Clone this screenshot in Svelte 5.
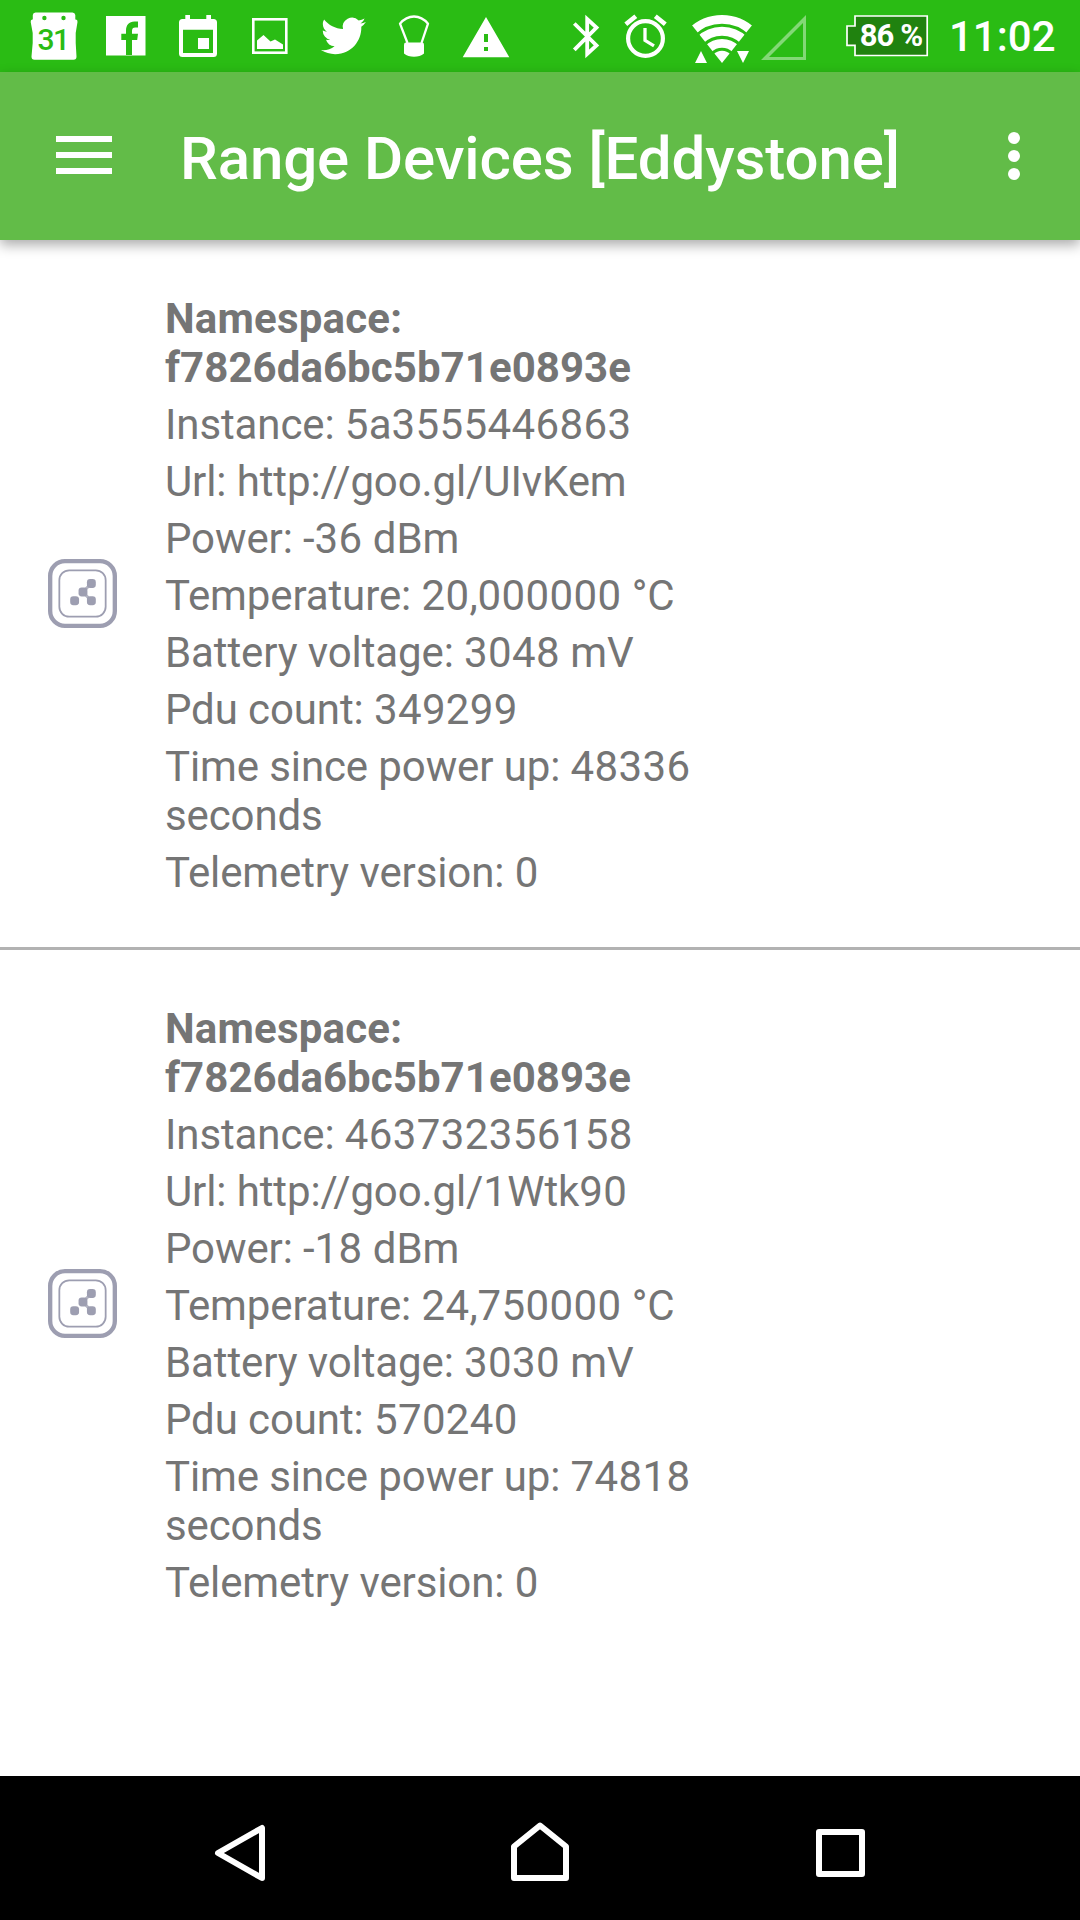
<script>
  const devices = [
    {
      namespace: 'f7826da6bc5b71e0893e',
      rows: [
        'Instance: 5a3555446863',
        'Url: http://goo.gl/UIvKem',
        'Power: -36 dBm',
        'Temperature: 20,000000 °C',
        'Battery voltage: 3048 mV',
        'Pdu count: 349299',
        'Time since power up: 48336 seconds',
        'Telemetry version: 0'
      ]
    },
    {
      namespace: 'f7826da6bc5b71e0893e',
      rows: [
        'Instance: 463732356158',
        'Url: http://goo.gl/1Wtk90',
        'Power: -18 dBm',
        'Temperature: 24,750000 °C',
        'Battery voltage: 3030 mV',
        'Pdu count: 570240',
        'Time since power up: 74818 seconds',
        'Telemetry version: 0'
      ]
    }
  ];

  // Runs of digits are spaced a little wider than the words around them.
  const runs = (text) => text.split(/(\d+)/).filter(Boolean);
  const isNumber = (run) => /^\d/.test(run);
</script>

<div class="screen">
  <div class="status">
    <div class="group">
      <!-- calendar 31 -->
      <svg width="72" height="72" viewBox="18 0 72 72">
        <path fill="#fff" fill-rule="evenodd" d="M35.500 12.500H72.500Q75 12.500 75.300 15V19.500H76Q77.700 19.500 77.500 22L75.700 33V43L76.500 56.500Q76.500 59.700 73.500 59.700H34.500Q31.500 59.700 31.500 56.500L32.700 43V33L30.700 22Q30.500 19.500 32.200 19.500H32.800V15Q33 12.500 35.500 12.500ZM42.200 18a2.200 2.200 0 1 0 4.400 0a2.200 2.200 0 1 0-4.400 0ZM61.300 18a2.200 2.200 0 1 0 4.400 0a2.200 2.200 0 1 0-4.400 0Z" />
        <text class="day" x="53" y="50" text-anchor="middle">31</text>
      </svg>
      <!-- facebook -->
      <svg width="72" height="72" viewBox="90 0 72 72">
        <path fill="#fff" fill-rule="evenodd" d="M106 16H145.500V55.600H106ZM126 56V40H121.300V33.800H126V31C126 25 129 21.600 134.500 21.600H138V27.600H135.300C133 27.600 132 28.700 132 31V33.800H138L137.200 40H132V56Z" />
      </svg>
      <!-- event -->
      <svg width="72" height="72" viewBox="162 0 72 72">
        <path fill="#fff" fill-rule="evenodd" d="M185.300 15H190V19H206.300V15H211V19H213.500Q217 19 217 22.500V53.500Q217 57 213.500 57H182.500Q179 57 179 53.500V22.500Q179 19 182.500 19H185.300ZM183 29.700V53H213V29.700ZM198 38H209V49H198Z" />
      </svg>
      <!-- picture -->
      <svg width="72" height="72" viewBox="234 0 72 72">
        <rect x="253.300" y="19.300" width="33" height="33.400" fill="none" stroke="#fff" stroke-width="2.600" />
        <path fill="#fff" d="M257 40.500L263.500 35L270.500 41.500L275 39.500L283 44.500V49H257Z" />
      </svg>
      <!-- twitter -->
      <svg width="72" height="72" viewBox="306 0 72 72">
        <path fill="#fff" transform="translate(321 13.500) scale(1.870)" d="M23.953 4.570a10 10 0 01-2.825.775 4.958 4.958 0 002.163-2.723c-.951.555-2.005.959-3.127 1.184a4.920 4.920 0 00-8.384 4.482C7.690 8.095 4.067 6.130 1.640 3.162a4.822 4.822 0 00-.666 2.475c0 1.710.870 3.213 2.188 4.096a4.904 4.904 0 01-2.228-.616v.060a4.923 4.923 0 003.946 4.827 4.996 4.996 0 01-2.212.085 4.936 4.936 0 004.604 3.417 9.867 9.867 0 01-6.102 2.105c-.390 0-.779-.023-1.170-.067a13.995 13.995 0 007.557 2.209c9.053 0 13.998-7.496 13.998-13.985 0-.210 0-.420-.015-.630A9.935 9.935 0 0024 4.590z" />
      </svg>
      <!-- balloon -->
      <svg width="72" height="72" viewBox="378 0 72 72">
        <path fill="none" stroke="#fff" stroke-width="2.300" stroke-linejoin="round" d="M407.500 43L400 23.700Q406 16.500 414 16.500T428 23.700L421.500 43" />
        <path fill="#fff" d="M406 42.500H422Q424 42.500 424 44.500V53.500Q420 56.700 414 56.700T404 53.500V44.500Q404 42.500 406 42.500Z" />
      </svg>
      <!-- warning -->
      <svg width="72" height="72" viewBox="450 0 72 72">
        <path fill="#fff" fill-rule="evenodd" d="M486 17L509.300 57.200H462.700ZM484 34V42H488V34ZM484 47V51H488V47Z" />
      </svg>
    </div>
    <div class="group">
      <!-- bluetooth -->
      <svg width="54" height="72" viewBox="561 0 54 72">
        <path fill="none" stroke="#fff" stroke-width="3.800" d="M574.300 23.500L596.500 45.500L587.200 54V19L596.500 27.500L574.300 49.800" />
      </svg>
      <!-- alarm -->
      <svg width="66" height="72" viewBox="615 0 66 72">
        <g fill="none" stroke="#fff">
          <circle cx="645.500" cy="38.500" r="17.400" stroke-width="4.200" />
          <path stroke-width="3.300" d="M645 28V40.300L654 45.800" />
          <path stroke-width="4.600" d="M625.800 24.300L635.800 16.300M665.300 24.300L655.300 16.300" />
        </g>
      </svg>
      <!-- wifi -->
      <svg width="78" height="72" viewBox="681 0 78 72">
        <clipPath id="fan"><path d="M722 63L685 16.500V0H759V16.500Z" /></clipPath>
        <g clip-path="url(#fan)" fill="none" stroke="#fff">
          <circle cx="722" cy="62.700" r="43.400" stroke-width="8.800" />
          <circle cx="722" cy="62.700" r="31.500" stroke-width="9" />
          <circle cx="722" cy="62.700" r="19.400" stroke-width="8.800" />
          <circle cx="722" cy="62.700" r="6" stroke-width="12" />
        </g>
        <path fill="#fff" d="M695 63L701 51L707 63ZM737 51H749L743 63Z" />
      </svg>
      <!-- empty signal -->
      <svg width="69" height="72" viewBox="759 0 69 72">
        <path fill="#fff" fill-opacity=".42" fill-rule="evenodd" d="M761 60L806 15V60ZM769 57H803V23Z" />
      </svg>
      <!-- battery -->
      <svg width="112" height="72" viewBox="828 0 112 72">
        <path fill="#20820f" stroke="#fff" stroke-width="1.700" d="M855 16H927.200V55.500H855V45.300H847V26H855Z" />
        <text class="charge" x="859.700" y="46.300" textLength="63.500">86 %</text>
      </svg>
      <span class="clock">11:02</span>
    </div>
  </div>

  <header class="appbar">
    <div class="menu"><i></i><i></i><i></i></div>
    <h1>Range Devices [Eddystone]</h1>
    <div class="more"><i></i><i></i><i></i></div>
  </header>

  <main>
    {#each devices as device}
      <section class="device">
        <svg class="beacon" width="69" height="69" viewBox="0 0 70 70">
          <rect x="2.200" y="2.200" width="65.600" height="65.600" rx="15" fill="none" stroke="#9d9eb1" stroke-width="4.400" />
          <rect x="11.500" y="11.500" width="47" height="47" rx="10" fill="none" stroke="#9d9eb1" stroke-width="1.800" />
          <path stroke="#b4b5c3" stroke-width="3" fill="none" d="M44 24.500L35.500 33.500L44 42.500" />
          <g fill="#9d9eb1">
            <rect x="39.500" y="20.300" width="9" height="9" rx="3.200" />
            <rect x="31" y="29" width="9" height="9" rx="3.200" />
            <rect x="22.500" y="37.800" width="9" height="9" rx="3.200" />
            <rect x="39.500" y="37.800" width="9" height="9" rx="3.200" />
          </g>
        </svg>
        <div class="info">
          <p class="name"><span class="key">Namespace:</span> {device.namespace}</p>
          {#each device.rows as row}
            <p>{#each runs(row) as run}<span class:num={isNumber(run)}>{run}</span>{/each}</p>
          {/each}
        </div>
      </section>
    {/each}
  </main>

  <nav>
    <svg width="60" height="72" viewBox="210 1812 60 72">
      <path d="M218 1853L262 1828V1878Z" />
    </svg>
    <svg width="70" height="72" viewBox="505 1812 70 72">
      <path d="M540 1825.500L566 1846.500V1878H514V1846.500Z" />
    </svg>
    <svg width="60" height="72" viewBox="810 1812 60 72">
      <path d="M819 1832H862V1874H819Z" />
    </svg>
  </nav>
</div>

<style>
  :global(body) {
    margin: 0;
    background: #fff;
  }
  .screen {
    width: 1080px;
    height: 1920px;
    display: flex;
    flex-direction: column;
    overflow: hidden;
    background: #fff;
    font-family: Roboto, sans-serif;
  }
  .status {
    height: 72px;
    flex: none;
    display: flex;
    justify-content: space-between;
    padding: 0 24px 0 18px;
    background: #2abc14;
  }
  .group {
    display: flex;
    align-items: center;
  }
  .group svg {
    display: block;
    flex: none;
  }
  .day {
    font-size: 30px;
    font-weight: 500;
    letter-spacing: -1.5px;
    fill: #2abc14;
  }
  .charge {
    font-size: 31px;
    font-weight: 700;
    fill: #fff;
  }
  .clock {
    width: 107px;
    margin-left: 9px;
    padding-top: 1px;
    font-size: 42px;
    line-height: 49px;
    font-weight: 500;
    color: #fff;
    white-space: nowrap;
  }
  .appbar {
    height: 168px;
    flex: none;
    box-sizing: border-box;
    display: flex;
    align-items: center;
    padding: 0 60px 0 56px;
    background: #62bc48;
    box-shadow: 0 5px 12px rgba(0, 0, 0, 0.33);
  }
  .menu {
    display: flex;
    flex-direction: column;
    gap: 10px;
    width: 56px;
    padding-bottom: 2px;
  }
  .menu i {
    height: 6px;
    background: #fff;
  }
  h1 {
    flex: 1;
    margin: 0;
    padding: 6px 0 0 68px;
    font-size: 60px;
    line-height: 70px;
    font-weight: 500;
    letter-spacing: -0.1px;
    color: #fff;
    white-space: nowrap;
  }
  .more {
    display: flex;
    flex-direction: column;
    gap: 6px;
  }
  .more i {
    width: 12px;
    height: 12px;
    border-radius: 50%;
    background: #fff;
  }
  main {
    flex: 1;
  }
  .device {
    display: flex;
    align-items: center;
    padding: 54px 0 50px 48px;
  }
  .device + .device {
    border-top: 3px solid #b2b2b2;
  }
  .beacon {
    flex: none;
    margin-bottom: 4px;
  }
  .info {
    width: 570px;
    margin-left: 48px;
    display: flex;
    flex-direction: column;
    gap: 8px;
  }
  p {
    margin: 0;
    font-size: 42px;
    line-height: 49px;
    letter-spacing: -0.11px;
    color: #757575;
  }
  .num {
    letter-spacing: 0.38px;
  }
  .name {
    font-weight: 700;
    letter-spacing: 0.06px;
  }
  .key {
    letter-spacing: 0.2px;
  }
  nav {
    height: 144px;
    flex: none;
    box-sizing: border-box;
    display: flex;
    justify-content: space-between;
    padding: 36px 210px 0;
    background: #000;
  }
  nav path {
    fill: none;
    stroke: #fff;
    stroke-width: 6;
    stroke-linejoin: round;
  }
</style>
